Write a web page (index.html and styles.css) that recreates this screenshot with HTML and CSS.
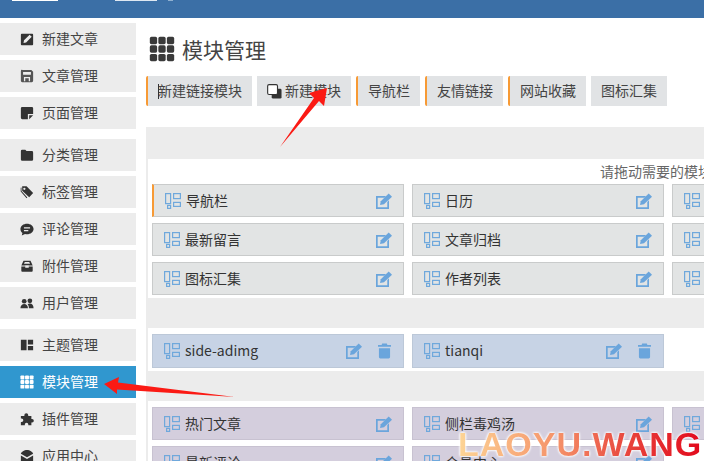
FILE: index.html
```html
<!DOCTYPE html>
<html lang="en">
<head>
    <meta charset="UTF-8">
    <meta name="viewport" content="width=device-width, initial-scale=1.0">
    <title>模块管理</title>
    <link rel="stylesheet" href="styles.css">
</head>
<body>
    <svg class="defs" aria-hidden="true">
        <symbol id="i-write" viewBox="0 0 16 16"><path fill-rule="evenodd" d="M1 3a1 1 0 0 1 1-1h12a1 1 0 0 1 1 1v11a1 1 0 0 1-1 1H2a1 1 0 0 1-1-1zM4 12.500l.6-3L11 3l2.400 2.400L7 12z"/></symbol>
        <symbol id="i-article" viewBox="0 0 16 16"><path fill-rule="evenodd" d="M3 1h10l2 2v10.500a1.500 1.500 0 0 1-1.500 1.500h-11A1.500 1.500 0 0 1 1 13.500v-11A1.500 1.500 0 0 1 3 1zM3.500 3.500v3h9v-3zM4.500 9v5h1.500v-3.500h4V14h1.500V9z"/></symbol>
        <symbol id="i-note" viewBox="0 0 16 16"><path d="M2.500 1h11A1.500 1.500 0 0 1 15 2.500V9H9v6H2.500A1.500 1.500 0 0 1 1 13.500v-11A1.500 1.500 0 0 1 2.500 1zM10.500 15v-4.500H15z"/></symbol>
        <symbol id="i-folder" viewBox="0 0 16 16"><path d="M1 3.500A1.500 1.500 0 0 1 2.500 2H6l1.500 1.500h6A1.500 1.500 0 0 1 15 5v8a1.500 1.500 0 0 1-1.500 1.500h-11A1.500 1.500 0 0 1 1 13z"/></symbol>
        <symbol id="i-tags" viewBox="0 0 16 16"><path fill-rule="evenodd" d="M2.500 1.500h5l7.500 7.500-4.500 5L2.500 6.500zM5 3a1.300 1.300 0 1 0 0 2.600A1.300 1.300 0 0 0 5 3z"/><path d="M.8 3l.9-.2v4l6.700 7.400-.9.9L.8 7.500z"/></symbol>
        <symbol id="i-comment" viewBox="0 0 16 16"><path fill-rule="evenodd" d="M8 2c4 0 7.500 2.500 7.500 6s-3.500 6-7.500 6c-.8 0-1.500-.1-2.200-.3L2 15.500l.8-3C1.300 11.400.5 9.800.5 8 .5 4.500 4 2 8 2zM4.500 6v1.500h7V6zM4.500 9v1.500h5V9z"/></symbol>
        <symbol id="i-box" viewBox="0 0 16 16"><path d="M1.500 8.500H6V10h4V8.500h4.500v5a1 1 0 0 1-1 1h-11a1 1 0 0 1-1-1z"/><path fill-rule="evenodd" d="M4 2h8l2.500 5.500H10V7H6v.5H1.500zM5.500 3.500 4.500 5.500h7l-1-2z"/></symbol>
        <symbol id="i-users" viewBox="0 0 16 16"><circle cx="4.800" cy="6" r="2.700"/><circle cx="11.300" cy="5.500" r="2.700"/><path d="M.5 14c0-3 1.800-5 4.300-5s4.300 2 4.300 5zM10.200 14c0-1.900-.5-3.500-1.500-4.600.8-.6 1.600-.9 2.600-.9 2.500 0 4.200 2.200 4.200 5.500z"/></symbol>
        <symbol id="i-columns" viewBox="0 0 16 16"><path d="M1 2h6.500v12H1zM9 2h6v5.500H9zM9 9h6v5H9z"/></symbol>
        <symbol id="i-grid" viewBox="0 0 16 16"><rect x=".5" y=".5" width="4.500" height="4.500" rx="1"/><rect x="5.750" y=".5" width="4.500" height="4.500" rx="1"/><rect x="11" y=".5" width="4.500" height="4.500" rx="1"/><rect x=".5" y="5.750" width="4.500" height="4.500" rx="1"/><rect x="5.750" y="5.750" width="4.500" height="4.500" rx="1"/><rect x="11" y="5.750" width="4.500" height="4.500" rx="1"/><rect x=".5" y="11" width="4.500" height="4.500" rx="1"/><rect x="5.750" y="11" width="4.500" height="4.500" rx="1"/><rect x="11" y="11" width="4.500" height="4.500" rx="1"/></symbol>
        <symbol id="i-puzzle" viewBox="0 0 16 16"><path d="M5 3.500a2.200 2.200 0 1 1 4.400 0V4.500H13V8h.8a2 2 0 1 1 0 4H13v3H9.500v-.8a2 2 0 1 0-4 0v.8H1v-3.500h.8a2 2 0 1 0 0-4H1V4.500h4z"/></symbol>
        <symbol id="i-mail" viewBox="0 0 16 16"><path d="M1 5.500C1 3.500 5 1 8 1s7 2.500 7 4.500L8 9.500zM1 7.500l7 4 7-4v6a1.500 1.500 0 0 1-1.500 1.500h-11A1.500 1.500 0 0 1 1 13.500z"/></symbol>
        <symbol id="i-drag" viewBox="0 0 16 16"><g fill="none" stroke="currentColor" stroke-width="1.200"><rect x=".6" y=".6" width="5" height="10"/><rect x="2.600" y="12.400" width="3" height="3"/><rect x="8.600" y=".6" width="6.800" height="5"/><rect x="8.600" y="9.400" width="6.800" height="4"/></g></symbol>
        <symbol id="i-edit" viewBox="0 0 16 16"><path d="M0 3h10L8.500 4.700H1.700v9.600h9.600V9L13 7.300V16H0z"/><path d="M4 12l.8-3.800L12.700.5 16 3.800 8 11.200z"/></symbol>
        <symbol id="i-trash" viewBox="0 0 14 16"><path d="M4.500 0h5l.6 1.500H14v2H0v-2h3.900zM1 5h12v9.500a1.500 1.500 0 0 1-1.500 1.500h-9A1.500 1.500 0 0 1 1 14.500z"/></symbol>
        <symbol id="i-copy" viewBox="0 0 16 16"><rect x="5" y="5" width="10.500" height="10.500" rx="1.500" fill="#333"/><rect x=".7" y=".7" width="10.500" height="10.500" rx="1.500" fill="#fff" stroke="#333" stroke-width="1.200"/></symbol>
    </svg>

    <div class="topbar">
        <span class="topbar-logo"></span>
        <span class="topbar-name"></span>
        <span class="topbar-caret"></span>
    </div>

    <div class="page">
        <nav class="sidebar">
            <div class="nav-group">
                <a class="nav-item"><svg class="nav-icon"><use href="#i-write"/></svg>新建文章</a>
                <a class="nav-item"><svg class="nav-icon nav-icon-soft"><use href="#i-article"/></svg>文章管理</a>
                <a class="nav-item"><svg class="nav-icon"><use href="#i-note"/></svg>页面管理</a>
            </div>
            <div class="nav-group">
                <a class="nav-item"><svg class="nav-icon"><use href="#i-folder"/></svg>分类管理</a>
                <a class="nav-item"><svg class="nav-icon"><use href="#i-tags"/></svg>标签管理</a>
                <a class="nav-item"><svg class="nav-icon"><use href="#i-comment"/></svg>评论管理</a>
                <a class="nav-item"><svg class="nav-icon"><use href="#i-box"/></svg>附件管理</a>
                <a class="nav-item"><svg class="nav-icon"><use href="#i-users"/></svg>用户管理</a>
            </div>
            <div class="nav-group">
                <a class="nav-item"><svg class="nav-icon"><use href="#i-columns"/></svg>主题管理</a>
                <a class="nav-item active"><svg class="nav-icon"><use href="#i-grid"/></svg>模块管理</a>
                <a class="nav-item"><svg class="nav-icon"><use href="#i-puzzle"/></svg>插件管理</a>
                <a class="nav-item"><svg class="nav-icon"><use href="#i-mail"/></svg>应用中心</a>
            </div>
        </nav>

        <main class="main">
            <h1 class="title"><svg class="title-icon"><use href="#i-grid"/></svg>模块管理</h1>

            <div class="toolbar">
                <a class="btn btn-mark">新建链接模块<span class="caret"></span></a>
                <a class="btn"><svg class="btn-icon"><use href="#i-copy"/></svg>新建模块</a>
                <a class="btn btn-mark">导航栏</a>
                <a class="btn btn-mark">友情链接</a>
                <a class="btn btn-mark">网站收藏</a>
                <a class="btn">图标汇集</a>
            </div>

            <section class="panel panel-first">
                <div class="panel-body">
                    <p class="note">请拖动需要的模块</p>
                    <div class="tiles">
                        <div class="tile tile-mark"><svg class="drag"><use href="#i-drag"/></svg>导航栏<svg class="tool"><use href="#i-edit"/></svg></div>
                        <div class="tile"><svg class="drag"><use href="#i-drag"/></svg>日历<svg class="tool"><use href="#i-edit"/></svg></div>
                        <div class="tile"><svg class="drag"><use href="#i-drag"/></svg></div>
                        <div class="tile"><svg class="drag"><use href="#i-drag"/></svg>最新留言<svg class="tool"><use href="#i-edit"/></svg></div>
                        <div class="tile"><svg class="drag"><use href="#i-drag"/></svg>文章归档<svg class="tool"><use href="#i-edit"/></svg></div>
                        <div class="tile"><svg class="drag"><use href="#i-drag"/></svg></div>
                        <div class="tile"><svg class="drag"><use href="#i-drag"/></svg>图标汇集<svg class="tool"><use href="#i-edit"/></svg></div>
                        <div class="tile"><svg class="drag"><use href="#i-drag"/></svg>作者列表<svg class="tool"><use href="#i-edit"/></svg></div>
                        <div class="tile"><svg class="drag"><use href="#i-drag"/></svg></div>
                    </div>
                </div>
            </section>

            <section class="panel">
                <div class="panel-body">
                    <div class="tiles tiles-custom">
                        <div class="tile tile-blue"><svg class="drag"><use href="#i-drag"/></svg>side-adimg<svg class="tool"><use href="#i-edit"/></svg><svg class="tool tool-trash"><use href="#i-trash"/></svg></div>
                        <div class="tile tile-blue"><svg class="drag"><use href="#i-drag"/></svg>tianqi<svg class="tool"><use href="#i-edit"/></svg><svg class="tool tool-trash"><use href="#i-trash"/></svg></div>
                    </div>
                </div>
            </section>

            <section class="panel">
                <div class="panel-body">
                    <div class="tiles">
                        <div class="tile tile-purple"><svg class="drag"><use href="#i-drag"/></svg>热门文章<svg class="tool"><use href="#i-edit"/></svg></div>
                        <div class="tile tile-purple"><svg class="drag"><use href="#i-drag"/></svg>侧栏毒鸡汤<svg class="tool"><use href="#i-edit"/></svg></div>
                        <div class="tile tile-purple"><svg class="drag"><use href="#i-drag"/></svg></div>
                        <div class="tile tile-purple"><svg class="drag"><use href="#i-drag"/></svg>最新评论<svg class="tool"><use href="#i-edit"/></svg></div>
                        <div class="tile tile-purple"><svg class="drag"><use href="#i-drag"/></svg>会员中心<svg class="tool"><use href="#i-edit"/></svg></div>
                    </div>
                </div>
            </section>
        </main>
    </div>

    <svg class="arrows" viewBox="0 0 704 461" aria-hidden="true">
        <polygon points="280,147 314,98 309,93 327,88 324,106 319,101"/>
        <polygon points="104,384 119,377 118,382.500 235,397 117,389.500 117,394"/>
    </svg>

    <div class="watermark">LAOYU.WANG</div>
</body>
</html>
```

FILE: styles.css
```css
html, body {
    margin: 0;
    padding: 0;
    height: 100%;
    overflow: hidden;
}
body {
    background-color: #fff;
    color: #444;
    font-family: "Noto Sans CJK SC", "Noto Sans", sans-serif;
    font-size: 14px;
    position: relative;
}
.defs {
    display: none;
}

.topbar {
    background-color: #3b6fa6;
    height: 18px;
    display: flex;
    align-items: flex-start;
}
.topbar-logo {
    background-color: #fff;
    width: 46px;
    height: 1px;
    margin-left: 12px;
}
.topbar-name {
    background-color: #dfe8f2;
    width: 42px;
    height: 1px;
    margin-left: 57px;
}
.topbar-caret {
    background-color: #8fb0d0;
    width: 5px;
    height: 1px;
    margin-left: 11px;
}

.page {
    display: flex;
    padding-top: 5px;
}

.sidebar {
    width: 136px;
    flex: none;
}
.nav-group {
    margin-bottom: 10px;
}
.nav-item {
    display: flex;
    align-items: center;
    gap: 8px;
    box-sizing: border-box;
    height: 32px;
    margin-bottom: 5px;
    padding: 0 0 2px 20px;
    background-color: #ececec;
    color: #444;
}
.nav-item.active {
    background-color: #3097cf;
    color: #fff;
}
.nav-icon {
    width: 14px;
    height: 14px;
    margin-top: 2px;
    fill: #333;
}
.nav-icon-soft {
    fill: #555;
}
.active .nav-icon {
    fill: #fff;
}

.main {
    flex: none;
    width: 558px;
    margin-left: 10px;
}
.title {
    display: flex;
    align-items: center;
    gap: 7px;
    height: 28px;
    margin: 12px 0 0 3px;
    color: #444;
    font-size: 21px;
    font-weight: normal;
}
.title-icon {
    width: 26px;
    height: 26px;
    fill: #3a3a3a;
}

.toolbar {
    display: flex;
    gap: 5px;
    margin-top: 13px;
}
.btn {
    display: flex;
    align-items: center;
    position: relative;
    box-sizing: border-box;
    height: 30px;
    padding: 0 10px 2px;
    background-color: #e1e3e5;
    color: #444;
    white-space: nowrap;
}
.btn-mark {
    border-left: 2px solid #f79a35;
    border-radius: 2px 0 0 2px;
}
.btn-icon {
    width: 15px;
    height: 15px;
    margin: 2px 3px 0 0;
}
.caret {
    position: absolute;
    left: 10px;
    top: 8px;
    width: 1px;
    height: 15px;
    background-color: #333;
}

.panel {
    width: 558px;
    padding: 30px 0 0 2px;
    background-color: #ececec;
    box-sizing: border-box;
}
.panel-first {
    margin-top: 21px;
    padding-top: 32px;
}
.panel-body {
    background-color: #fff;
    padding: 6px 0 3px 4px;
}
.note {
    margin: -6px 0 0 448px;
    height: 25px;
    line-height: 25px;
    color: #666;
    white-space: nowrap;
}
.tiles {
    display: grid;
    grid-template-columns: repeat(3, 252px);
    gap: 6px 8px;
}
.tile {
    display: flex;
    align-items: center;
    box-sizing: border-box;
    height: 33px;
    padding: 0 11px 2px;
    background-color: #e2e4e4;
    border: 1px solid #c9cbcb;
    color: #333;
    white-space: nowrap;
}
.tile-mark {
    border-left: 2px solid #f79a35;
}
.tile-blue {
    height: 34px;
    background-color: #c7d3e5;
    border-color: #bcc8d8;
}
.tile-purple {
    background-color: #d4cedd;
    border-color: #c8c2d1;
}
.drag {
    width: 16px;
    height: 16px;
    margin: 2px 5px 0 0;
    color: #6fa8dc;
    flex: none;
}
.tool {
    width: 16px;
    height: 16px;
    margin: 2px 0 0 auto;
    fill: #6aa5dc;
    flex: none;
}
.tool-trash {
    width: 13px;
    margin-left: 16px;
    margin-right: 1px;
}

.arrows {
    position: absolute;
    left: 0;
    top: 0;
    width: 704px;
    height: 461px;
    fill: #fb1a14;
    pointer-events: none;
}
.watermark {
    position: absolute;
    left: 458px;
    top: 424px;
    font-family: "Liberation Sans", Arial, sans-serif;
    font-size: 34px;
    font-weight: bold;
    letter-spacing: 1px;
    line-height: 40px;
    white-space: nowrap;
    color: transparent;
    background: linear-gradient(90deg, #fdd596 0%, #f5936a 40%, #e8443c 70%, #e2091c 100%);
    -webkit-background-clip: text;
    background-clip: text;
    filter: drop-shadow(0 0 1px #fff) drop-shadow(0 0 1px #fff);
}
```
